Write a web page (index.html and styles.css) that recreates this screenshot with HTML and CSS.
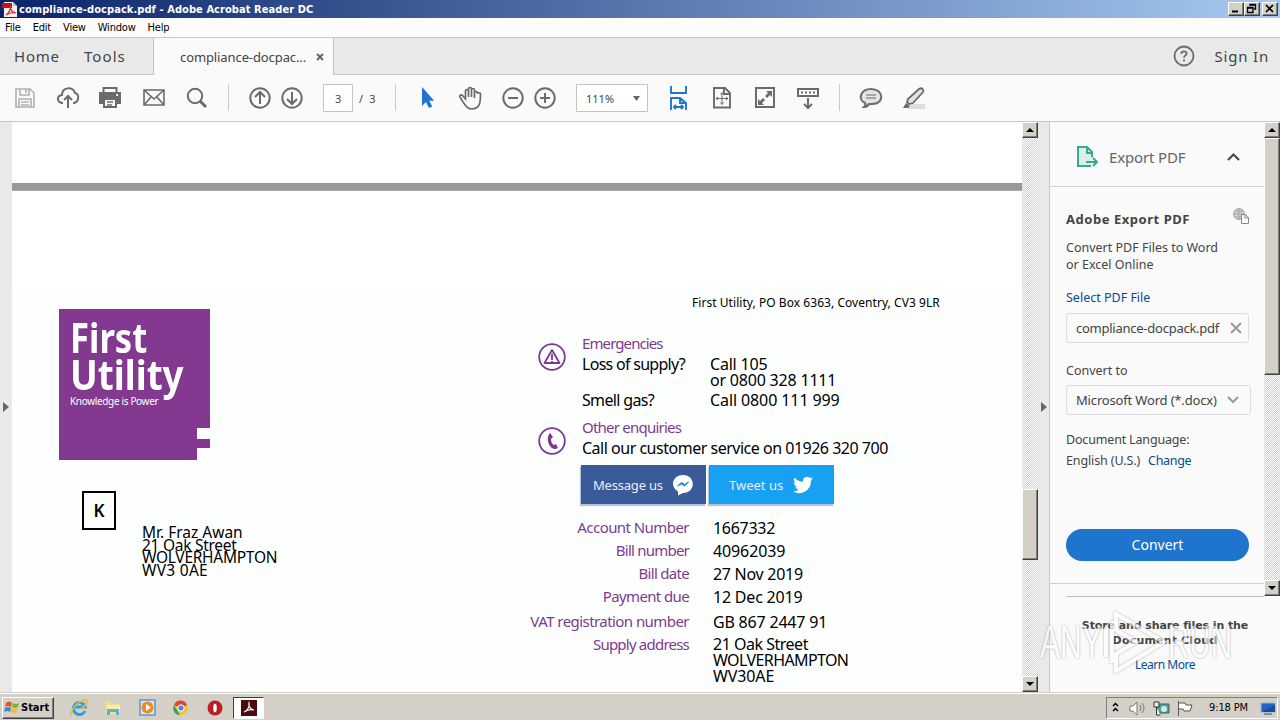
FILE: index.html
```html
<!DOCTYPE html>
<html lang="en"><head><meta charset="utf-8"><title>compliance-docpack.pdf - Adobe Acrobat Reader DC</title>
<link rel="stylesheet" href="styles.css"></head>
<body>
<header class="titlebar">
<svg class="app-icon" width="16" height="16" viewBox="0 0 16 16"><path d="M2 1h9l4 4v11H2z" fill="#f4f2f0"/><path d="M11 1v4h4z" fill="#bbb"/><path d="M0 2h10v5H0z" fill="#c81414"/><path d="M4 14c3-2 5-6 4-9 0 4 3 7 6 7-3-1-7 0-10 2z" fill="none" stroke="#d03030" stroke-width="1.2"/></svg>
<span class="title">compliance-docpack.pdf - Adobe Acrobat Reader DC</span>
<div class="winbtns"><i class="wb"><svg width="13" height="11"><path d="M3 8.500h6" stroke="#000" stroke-width="2"/></svg></i><i class="wb"><svg width="13" height="11"><path d="M5 3V1.500h5.500V6H9M2.500 4.500h5.500v5h-5.500zM2.500 5h5.500M5 2h5" fill="none" stroke="#000" stroke-width="1.300"/></svg></i><i class="wb close"><svg width="13" height="11"><path d="M3 2l7 7M10 2l-7 7" stroke="#000" stroke-width="1.700"/></svg></i></div>
</header>
<nav class="menubar"><span class="m1">File</span><span class="m2">Edit</span><span class="m3">View</span><span class="m4">Window</span><span class="m5">Help</span></nav>
<div class="tabs"><div class="tabs-left"><span class="home">Home</span><span class="tools">Tools</span></div>
<div class="tab-active"><span class="tabname">compliance-docpac...</span><svg width="8" height="8"><path d="M1 1l6 6M7 1L1 7" stroke="#666" stroke-width="2"/></svg></div>
<div class="tabs-right"><svg width="22" height="22" viewBox="0 0 22 22"><circle cx="11" cy="11" r="9.500" fill="none" stroke="#6b6b6b" stroke-width="1.800"/><path d="M8.300 8.700c.2-3.300 5.500-3 5.300 0-.2 1.700-2.600 1.800-2.600 4M11 14.400v2" fill="none" stroke="#6b6b6b" stroke-width="1.800"/></svg><span class="signin">Sign In</span></div></div>
<div class="toolbar">
<svg width="1000" height="46" viewBox="0 75 1000 46" fill="none" stroke="#6b6b6b" stroke-width="2">
<g stroke="#b0b0b0" stroke-width="1.600"><path d="M16 89h14l4 4v14H16zM20 89v6h9v-6M19 107v-8h12v8M21 102h8M21 105h8M26 90v3"/></g>
<path d="M63 103c-6 0-7-7-1-8 0-8 11-9 13-2 5 1 4 10-2 10M68 108V96M64 100l4-4 4 4"/>
<g><path d="M103.500 94v-6h13v6"/><path d="M99 92h22v12h-4v-5h-14v5h-4z" fill="#6b6b6b" stroke="none"/><path d="M104 99h12v8h-12z" fill="#fafafa"/><path d="M107 102h6M107 105h5" stroke-width="1.300"/><path d="M116 95h2" stroke="#eee"/></g>
<path d="M144 90h20v15h-20zM144 90l10 9 10-9M144 105l7-8M164 105l-7-8" stroke-width="1.600"/>
<circle cx="195" cy="96" r="7.200"/><path d="M200 101l6 6" stroke-width="3"/>
<path d="M228.500 84v27M395.500 84v27M839.500 84v27" stroke="#cacaca" stroke-width="1"/>
<circle cx="260" cy="98" r="9.700"/><path d="M260 104V92M255 97l5-5 5 5"/>
<circle cx="292" cy="98" r="9.700"/><path d="M292 92v12M287 99l5 5 5-5"/>
<path d="M323.500 84.500h29v27h-29z" fill="#fff" stroke="#c4c4c4" stroke-width="1"/>
<path d="M422 87v19l4-4 3 6 3.200-1.600-3-5.700h5z" fill="#1f74ce" stroke="none"/>
<path d="M463 102l-3-5c-1-2 1.500-3 3-1l2.500 3v-8c0-2 3-2 3 0v6-8c0-2 3-2 3 0v8-7c0-2 3-2 3 0v8-5c0-2 3-2 3 0 0 0 3-1 3 1 0 7 0 15-9 15-5 0-6-4-8.500-7z" stroke-width="1.700"/>
<circle cx="513" cy="98" r="9.700"/><path d="M508 98h10"/><circle cx="545" cy="98" r="9.700"/><path d="M540 98h10M545 93v10"/>
<path d="M576.500 84.500h71v27h-71z" fill="#fff" stroke="#c4c4c4" stroke-width="1"/><path d="M633 96h7l-3.500 5z" fill="#666" stroke="none"/>
<path d="M671 86v7h15v-7M671 110V98h9l6 5v7M680 98v5h6M674 107h9M676 105l-2 2 2 2M681 105l2 2-2 2" stroke="#1f74ce" stroke-width="1.900"/>
<path d="M714 88h11l5 5v14.500h-16zM724 88v6h6" stroke-width="1.900"/><path d="M722 93v11M716.500 98.500h11M720.500 94.500l1.500-2 1.500 2M720.500 102.500l1.500 2 1.500-2M718 97l-2 1.500 2 1.500M726 97l2 1.500-2 1.500" stroke-width="1"/>
<path d="M756 88h18v19h-18z"/><path d="M766 91h6v6l-2-2-3 3-2-2 3-3zM764 105h-6v-6l2 2 3-3 2 2-3 3z" fill="#6b6b6b" stroke="none"/>
<path d="M798 89h20v7h-20zM808 98v10M804 104l4 4 4-4"/><path d="M801 92.500h14" stroke-dasharray="2 2"/>
<path d="M871 89c13 0 14 15 1 15l-3 0c-1 2-3 3-5 3 1-1 2-3 1-4-8-4-4-14 6-14z" fill="#e4e4e4"/><path d="M866 95h10M866 98h10" stroke-width="1"/>
<path d="M911 104h14v5h-18z" fill="#ddd" stroke="none"/><path d="M908 99l11-10c3-2 5 1 4 3l-10 11-4 1-2-2z" fill="#e4e4e4" stroke-width="1.800"/><path d="M906 103l4 3-2 2h-5z" fill="#6b6b6b" stroke="none"/></svg>
<span class="pageno">3</span><span class="pages">/ 3</span><span class="zoom">111%</span>
</div>
<main>
<div class="gutter left"><svg width="6" height="10"><path d="M0 0l6 5-6 5z" fill="#666"/></svg></div>
<section class="doc"><div class="gap"></div>
<div class="page">
<div class="colA">
<div class="logo"><div class="l1">First</div><div class="l2">Utility</div><div class="l3">Knowledge is Power</div><i class="notch1"></i><i class="notch2"></i></div>
<div class="kbox">K</div>
<div class="addr"><div><span class="a1">Mr. Fraz Awan</span></div><div><span class="a2">21 Oak Street</span></div><div><span class="a3">WOLVERHAMPTON</span></div><div><span class="a4">WV3 0AE</span></div></div>
</div>
<div class="colB">
<div class="po"><span class="pot">First Utility, PO Box 6363, Coventry, CV3 9LR</span></div>
<div class="contact c1"><svg width="28" height="28" viewBox="0 0 28 28" fill="none" stroke="#7d3a90" stroke-width="1.800"><circle cx="14" cy="14" r="12.800"/><path d="M14 7l7.500 13h-15zM14 11v6M14 18v1.500" stroke-linejoin="round"/></svg>
<div class="contact-text"><div class="purple"><span class="e1">Emergencies</span></div>
<div class="row2"><span class="lab"><span class="e2">Loss of supply?</span></span><span class="val"><span class="e3">Call 105</span><br><span class="e4">or 0800 328 1111</span></span></div>
<div class="row2 gas"><span class="lab"><span class="e5">Smell gas?</span></span><span class="val"><span class="e6">Call 0800 111 999</span></span></div></div></div>
<div class="contact c2"><svg width="28" height="28" viewBox="0 0 28 28" fill="none" stroke="#7d3a90" stroke-width="1.800"><circle cx="14" cy="14" r="12.800"/><path d="M12 6l3 4-2 2c0 3 1 5 3 6l2-1 2 4c-3 2-6 1-8-2-3-4-3-10 0-13z" fill="#7d3a90" stroke="none"/></svg>
<div class="contact-text"><div class="purple"><span class="o1">Other enquiries</span></div><div class="svc"><span class="o2">Call our customer service on 01926 320 700</span></div></div></div>
<div class="social"><div class="fb"><span class="s1">Message us</span><svg width="22" height="22" viewBox="0 0 22 22"><path d="M11 1c13 0 13 18 0 18l-5 2.500v-4C-3 12 1 1 11 1z" fill="#fff"/><path d="M5.500 12l4-3.500 3 2 4-2.500-4 4-3-2z" fill="#1688e8" stroke="#1688e8"/></svg></div>
<div class="tw"><span class="s2">Tweet us</span><svg width="20" height="18" viewBox="0 0 24 20"><path d="M24 2.400c-.9.400-1.800.7-2.800.8 1-.6 1.800-1.600 2.200-2.700-1 .6-2 1-3.100 1.200A4.900 4.900 0 0 0 12 6.200C7.700 6 4.100 4 1.700 1c-1.300 2.200-.7 5.100 1.500 6.600-.8 0-1.600-.2-2.200-.6 0 2.300 1.600 4.400 3.900 4.900-.7.200-1.500.2-2.200.1.600 2 2.400 3.400 4.600 3.400A9.900 9.900 0 0 1 0 17.400 14 14 0 0 0 21.500 4.900c1-.7 1.800-1.600 2.500-2.500z" fill="#fff"/></svg></div></div>
<div class="bill">
<div class="br b1"><span class="k"><span class="k1">Account Number</span></span><span class="v"><span class="v1">1667332</span></span></div>
<div class="br b2"><span class="k"><span class="k2">Bill number</span></span><span class="v"><span class="v2">40962039</span></span></div>
<div class="br b3"><span class="k"><span class="k3">Bill date</span></span><span class="v"><span class="v3">27 Nov 2019</span></span></div>
<div class="br b4"><span class="k"><span class="k4">Payment due</span></span><span class="v"><span class="v4">12 Dec 2019</span></span></div>
<div class="br b5"><span class="k"><span class="k5">VAT registration number</span></span><span class="v"><span class="v5">GB 867 2447 91</span></span></div>
<div class="br b6"><span class="k"><span class="k6">Supply address</span></span><span class="v"><span class="v6">21 Oak Street</span><br><span class="v7">WOLVERHAMPTON</span><br><span class="v8">WV30AE</span></span></div>
</div>
</div></div></section>
<div class="scroll doc-scroll"><i class="btn up"></i><i class="thumb"></i><i class="btn down"></i></div>
<div class="gutter right"><svg width="6" height="10"><path d="M0 0l6 5-6 5z" fill="#666"/></svg></div>
<aside>
<div class="upper"><div class="tool">
<div class="exp-head"><svg width="21" height="22" viewBox="0 0 21 22"><path d="M14 20H1V1h9l5 5v5" fill="#d9efe8" stroke="#3aa88a" stroke-width="2"/><path d="M10 1v6h6M9 16h11M16 12l4 4-4 4" fill="none" stroke="#3aa88a" stroke-width="2"/></svg><span class="x1">Export PDF</span><svg class="chev" width="13" height="8"><path d="M1 7l5.500-5.500L12 7" fill="none" stroke="#444" stroke-width="2"/></svg></div>
<div class="exp-body">
<div class="head2"><span class="x2">Adobe Export PDF</span><svg width="17" height="17" viewBox="0 0 17 17" fill="none" stroke="#aaa"><circle cx="6" cy="6" r="5.500" fill="#ccc"/><path d="M6 0v12M0 6h12M1 3h10M1 9h10"/><path d="M8.500 6.500h4l3 3v6h-7z" fill="#f9f9f9" stroke="#888"/><path d="M12 6.500V10h4" stroke="#888"/></svg></div>
<div class="desc"><span class="x3">Convert PDF Files to Word</span><br><span class="x4">or Excel Online</span></div>
<div class="sel"><span class="x5">Select PDF File</span></div>
<div class="field"><span class="x6">compliance-docpack.pdf</span><svg width="12" height="12"><path d="M1 1l10 10M11 1L1 11" stroke="#999" stroke-width="2"/></svg></div>
<div class="conv"><span class="x7">Convert to</span></div>
<div class="field f2"><span class="x8">Microsoft Word (*.docx)</span><svg width="12" height="8"><path d="M1 1l5 5 5-5" fill="none" stroke="#999" stroke-width="2"/></svg></div>
<div class="lang"><span class="x9">Document Language:</span></div>
<div class="lang2"><span class="x10">English (U.S.)</span><a class="x11">Change</a></div>
<button class="convert"><span class="x12">Convert</span></button>
</div></div>
<div class="scroll side-scroll"><i class="btn up"></i><i class="thumb"></i><i class="btn down"></i></div></div>
<div class="promo"><span class="p1">Store and share files in the</span><span class="p2">Document Cloud</span><a class="p3">Learn More</a></div>
</aside>
</main>
<svg class="mark" width="196" height="66" viewBox="0 0 196 66" fill="#fff"><text x="1" y="49" textLength="62" lengthAdjust="spacingAndGlyphs">ANY</text><path d="M77 5l48 28-48 29v-17l20-12-20-12zM67 18v30M73 12v42" fill="none" stroke="#fff" stroke-width="4"/><text x="129" y="49" textLength="64" lengthAdjust="spacingAndGlyphs">RUN</text></svg>
<footer>
<div class="start"><svg width="16" height="15" viewBox="0 0 16 15"><path d="M2 3q3-3 6 0L7 7Q4 5 1 7z" fill="#e8541c"/><path d="M9 3q3 2 6 0l-1 4q-3 2-6 0z" fill="#78b82a"/><path d="M1 8q3-2 6 0l-1 4q-3-2-6 0z" fill="#3b85dd"/><path d="M8 8q3 2 6 0l-1 4q-3 2-6 0z" fill="#f7bd26"/></svg><span class="st">Start</span></div>
<svg class="tasks" width="180" height="24" viewBox="0 0 180 24"><g fill="none"><path d="M19 15a6 6 0 1 1 .3-4H9" stroke="#2f9ee2" stroke-width="3"/><path d="M6 19C2 19 10 5 19 4c5 0 0 7-4 9" stroke="#e8bd3c" stroke-width="1.600"/></g>
<path d="M40 6h5l1 2h8v11H40z" fill="#f2df86"/><path d="M41 9h13v7H41z" fill="#f7ecb0"/><path d="M41 19v-6h12v6h-3v-3h-6v3z" fill="#52b2e2"/>
<path d="M74 4h15v15H74z" fill="#d8e8f6" stroke="#5b96d0" stroke-width="1.500"/><circle cx="81.500" cy="11.500" r="6" fill="#f08a1c"/><path d="M80 8l5 3.500-5 3.500z" fill="#fff"/>
<circle cx="115" cy="12" r="7" fill="#f3c62c"/><path d="M115 12L108 9a7 7 0 0 1 13 0z" fill="#e14434"/><path d="M108 9l6 10c-6 0-8-6-6-10z" fill="#37a351"/><circle cx="115" cy="12" r="3.200" fill="#4687ee" stroke="#fff"/>
<circle cx="149" cy="12" r="7.500" fill="#c71b21"/><ellipse cx="149" cy="12" rx="2.300" ry="5" fill="#fff" stroke="#881016"/></svg>
<div class="task-on"><svg width="16" height="16" viewBox="0 0 16 16"><path d="M0 0h16v16H0z" fill="#4b0b0d"/><path d="M3 12c3-1 6-5 5-9-1 3 2 7 5 7-3-1-7 0-10 2z" fill="none" stroke="#fff" stroke-width="1.200"/></svg></div>
<div class="tray"><svg width="88" height="20" viewBox="0 0 88 20"><path d="M6 8l2.500-2.500L11 8M6 13l2.500-2.500L11 13" fill="none" stroke="#000" stroke-width="1.500"/><path d="M23 8h3l4-4v13l-4-4h-3z" fill="#fff" stroke="#777"/><path d="M33 7q2 3 0 6M35 5q4 5 0 10" fill="none" stroke="#777"/><path d="M50 6h12v9H50z" fill="#4aa3a0" stroke="#555"/><circle cx="57" cy="11" r="3" fill="#c6efe8"/><path d="M47 4h5v5h-5zM49.500 9v8h4" fill="#eee" stroke="#333"/><path d="M71.500 3v15M72 5h6l1 2h6l-2 6h-6l-1-2h-4" fill="#fff" stroke="#555"/></svg><span class="clock">9:18 PM</span><svg width="18" height="16" viewBox="0 0 18 16"><path d="M2 3h14v9H2z" fill="#2265c8" stroke="#8fb5e4"/><path d="M2 12L16 5v7z" fill="#174c9f"/><path d="M5 14h8" stroke="#777" stroke-width="1.500"/></svg></div>
</footer>
</body></html>
```
FILE: styles.css
```css
*{box-sizing:border-box}
body{margin:0;width:1280px;height:720px;overflow:hidden;display:flex;flex-direction:column;background:#fafafa;font-family:"Noto Sans",sans-serif;color:#444;position:relative}
span,a{white-space:nowrap}
svg{display:block;flex:none}
.titlebar{height:18px;flex:none;display:flex;align-items:center;background:linear-gradient(90deg,#0a246a,#a6caf0);padding:0 2px 0 2px;color:#fff;font:bold 11px "DejaVu Sans Condensed",sans-serif}
.app-icon{margin-right:1px}
.title{flex:1;letter-spacing:.07px}
.winbtns{display:flex}
.wb{width:16px;height:14px;background:#d4d0c8;border:1px solid;border-color:#fff #404040 #404040 #fff;box-shadow:inset -1px -1px #808080;display:block}
.wb.close{margin-left:2px}
.menubar{height:20px;flex:none;background:#fdfcfb;border-bottom:1px solid #c8c8c8;display:flex;align-items:center;padding-left:5px;color:#000;font:11px "DejaVu Sans Condensed",sans-serif;letter-spacing:-.2px}
.menubar span{margin-right:12px}
.tabs{height:37px;flex:none;background:#e9e9e9;display:flex;font-size:15px}
.tabs-left{width:154px;border-right:1px solid #c4c4c4;border-bottom:1px solid #c4c4c4;display:flex;align-items:center;padding-left:14px;gap:24px}
.home,.signin{letter-spacing:.8px}
.tools{letter-spacing:1.1px}
.tab-active{width:179px;background:#fafafa;display:flex;align-items:center;padding-left:26px;gap:10px;font-size:13px}
.tabname{letter-spacing:-.1px}
.tabs-right{flex:1;border-left:1px solid #c4c4c4;border-bottom:1px solid #c4c4c4;display:flex;align-items:center;justify-content:flex-end;padding-right:11px;gap:20px}
.toolbar{height:47px;flex:none;border-bottom:1px solid #c8c8c8;background:#fafafa;display:grid;font-size:11px;align-items:center}
.toolbar>*{grid-area:1/1}
.pageno{padding-left:335px}.pages{padding-left:359px;letter-spacing:1.600px}.zoom{padding-left:586px}
main{flex:1;display:flex;min-height:0}
.gutter{background:#e9e9e9;display:flex;align-items:center}
.gutter.left{width:12px;padding-left:3px}
.gutter.right{width:12px;border-right:1px solid #c8c8c8;padding-left:3px}
.doc{width:1010px;background:#fff;padding-top:61px}
.gap{height:8px;background:#999;border-bottom:1px solid #aaa}
.page{display:flex;height:501px;background:linear-gradient(#fff 98px,#fdffff 98px);padding:0 0 0 47px;color:#000;font-size:16px}
.colA{width:460px;padding-top:118px}
.logo{width:151px;height:151px;background:#82398f;color:#fff;position:relative;padding:9px 0 0 11px;line-height:37px;font-weight:700;font-size:42px}
.l1,.l2{width:max-content;transform-origin:left}
.l1{transform:scaleX(.825)}
.l2{transform:scaleX(.875)}
.logo .l3{font-weight:400;font-size:10px;line-height:19px;letter-spacing:-.34px}
.notch1,.notch2{position:absolute;background:#fff}
.notch1{right:0;bottom:21px;width:13px;height:11px}
.notch2{right:0;bottom:0;width:13px;height:12px}
.kbox{margin:31px 0 0 23px;width:34px;height:39px;border:2px solid #000;display:flex;align-items:center;justify-content:center;font-weight:600;font-size:17px}
.addr{margin:-4px 0 0 83px;line-height:12.7px;font-size:15.500px}
.a2,.a3{letter-spacing:-.27px}
.a4{letter-spacing:.29px}
.colB{width:480px;padding-top:104px}
.po{height:16px;line-height:16px;padding-left:173px;font-size:12px}
.pot{letter-spacing:.05px}
.contact{display:flex;padding-left:19px;gap:16px}
.c1{margin-top:22px}
.c1>svg,.c2>svg{margin-top:10px}
.contact-text{line-height:20px}
.purple,.k{color:#7d3a90;font-size:15px}
.e1{letter-spacing:-.9px}.e2{letter-spacing:-.71px}.e3{letter-spacing:-.2px}.e4{letter-spacing:-.2px}.e5{letter-spacing:-.66px}.e6{letter-spacing:-.1px}
.o1{letter-spacing:-.78px}.o2{letter-spacing:-.49px}
.row2{display:flex;line-height:16px;margin-top:3px}
.lab{width:128px}
.gas{margin-top:4px}
.c2{margin-top:9px}
.svc{line-height:20px;padding-top:1px}
.social{display:flex;gap:3px;margin:7px 0 0 62px;color:#e8edf8;font-size:13px}
.fb,.tw{width:125px;height:39px;display:flex;align-items:center;padding-left:12px;gap:9px;background:#3b5a99;box-shadow:-1px 2px 1px #b8c3d6}
.tw{background:#18a1f3;padding-left:20px;gap:10px}
.s1{letter-spacing:-.2px}
.bill{padding-top:14px}
.br{display:flex;line-height:20px;height:23px}
.k{width:170px;text-align:right;margin-right:24px;line-height:19px}
.k1,.k5{letter-spacing:-.56px}.k2,.k6{letter-spacing:-.78px}.k3{letter-spacing:-.7px}.k4{letter-spacing:-.63px}
.v1,.v3{letter-spacing:-.28px}.v2,.v8{letter-spacing:-.12px}.v4,.v5{letter-spacing:-.2px}.v6{letter-spacing:-.49px}.v7{letter-spacing:-.6px}
.b4{height:25px}
.b6 .v{line-height:16px;padding-top:1px}
.scroll{width:16px;display:flex;flex-direction:column;background:repeating-conic-gradient(#d4d0c8 0 25%,#fff 0 50%) 0 0/2px 2px;flex:none}
.btn,.thumb{display:block;background:#d4d0c8;border:1px solid;border-color:#fff #404040 #404040 #fff;box-shadow:inset -1px -1px #808080}
.btn{height:16px;display:flex;align-items:center;justify-content:center}
.btn::after{content:"";border:4px solid transparent;border-top:0;border-bottom-color:#000}
.btn.down::after{border:4px solid transparent;border-bottom:0;border-top-color:#000}
.doc-scroll .thumb{height:71px;margin:351px 0 116px}
.side-scroll .thumb{height:237px;margin-bottom:205px}
aside{flex:1;background:#fafafa;display:flex;flex-direction:column}
.upper{display:flex;height:474px}
.tool{flex:1;display:flex;flex-direction:column}
.exp-head{height:65px;border-bottom:1px solid #d0d0d0;display:flex;align-items:center;padding:5px 24px 0 27px;font-size:15px;color:#666}
.x1{margin-left:11px;letter-spacing:-.15px}
.chev{margin-left:auto}
.exp-body{padding:21px 13px 0 16px;font-size:12.500px;height:397px;border-bottom:1px solid #d0d0d0}
.head2{display:flex;justify-content:space-between;height:22px;line-height:22px;margin-right:1px;font-weight:700;font-size:13px}
.x2{letter-spacing:.54px}
.desc{line-height:17px;margin-top:9px}
.sel{color:#0a4a90;line-height:20px;margin-top:15px}
.field{height:30px;width:183px;margin-top:5px;border:1px solid #dedede;border-radius:3px;display:flex;align-items:center;justify-content:space-between;padding:0 6px 0 9px;font-size:13px}
.x6{letter-spacing:-.25px}.x8,.x9{letter-spacing:-.17px}
.conv{line-height:20px;margin-top:18px}
.f2{width:185px;margin-top:4px;padding-right:11px}
.lang{line-height:20px;margin-top:15px}
.lang2{line-height:20px;margin-top:1px}
.x10{letter-spacing:-.12px}
.x11{color:#0a4a90;margin-left:8px;letter-spacing:-.3px}
.convert{display:flex;align-items:center;justify-content:center;width:183px;height:32px;margin-top:58px;border:0;border-radius:16px;background:#1f74ce;color:#fff;font:14px/20px "Noto Sans",sans-serif;padding:0}
.promo{flex:1;border-top:1px solid #c0c0c0;margin-left:16px;padding:21px 0 0 0;width:198px;display:flex;flex-direction:column;align-items:center;font:bold 11px/15px "DejaVu Sans",sans-serif}
.p1{letter-spacing:-.1px}.p2{letter-spacing:.2px}
.p3{font:12px/18px "Noto Sans",sans-serif;margin-top:8px;color:#0a4a90;letter-spacing:-.49px}
.mark{position:absolute;left:1039px;top:609px;opacity:.65;font:46px "Liberation Sans",sans-serif;filter:drop-shadow(0 0 1px #888)}
footer{height:28px;flex:none;background:#d4d0c8;border-top:1px solid #d4d0c8;box-shadow:inset 0 1px #fff;display:flex;align-items:center;padding:2px 2px 0;color:#000;font:11px "DejaVu Sans Condensed",sans-serif}
.start{width:52px;height:22px;border:1px solid;border-color:#fff #404040 #404040 #fff;box-shadow:inset -1px -1px #808080;display:flex;align-items:center;gap:1px;padding-left:1px;font-weight:700}
.tasks{margin-left:12px}
.task-on{width:31px;height:22px;border:1px solid;border-color:#404040 #fff #fff #404040;background:#fff;margin-left:-13px;display:flex;align-items:center;justify-content:center}
.tray{margin-left:auto;height:22px;width:172px;border:1px solid;border-color:#808080 #fff #fff #808080;display:flex;align-items:center;justify-content:space-between}
.clock{margin-left:3px;letter-spacing:-.13px}
```
